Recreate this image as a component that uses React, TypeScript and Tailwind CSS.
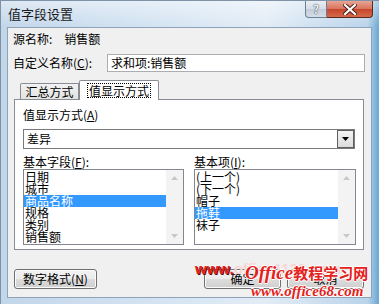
import React from "react";

const Btn = ({ children, className = "" }: { children: React.ReactNode; className?: string }) => (
  <div
    className={
      "h-[20px] rounded-[3px] border border-[#707070] flex items-center justify-center text-[12px] text-black bg-[linear-gradient(to_bottom,#f2f2f2_0%,#ebebeb_50%,#dddddd_50%,#cfcfcf_100%)] shadow-[inset_0_0_0_1px_#fbfbfb] " +
      className
    }
  >
    {children}
  </div>
);

const ScrollBar = () => (
  <div className="w-[17px] h-full bg-[#f3f3f3] flex flex-col justify-between items-center py-[6px]">
    <svg width="7" height="4" viewBox="0 0 7 4">
      <path d="M0 4 L3.5 0 L7 4 Z" fill="#c8c8c8" />
    </svg>
    <svg width="7" height="4" viewBox="0 0 7 4">
      <path d="M0 0 L3.5 4 L7 0 Z" fill="#c8c8c8" />
    </svg>
  </div>
);

const ListBox = ({ items, sel, width }: { items: string[]; sel: number; width: number }) => (
  <div
    className="h-[76px] border border-[#828790] bg-white flex"
    style={{ width }}
  >
    <div className="flex-1 flex flex-col pt-[1px]">
      {items.map((it, i) => (
        <div
          key={i}
          className={
            "h-[12px] leading-[12px] pl-[1px] text-[12px] whitespace-nowrap " +
            (i === sel ? "bg-[#3399ff] text-white" : "text-black")
          }
        >
          {it}
        </div>
      ))}
    </div>
    <ScrollBar />
  </div>
);

export default function App() {
  return (
    <div className="w-[379px] h-[304px] relative overflow-hidden font-['Noto_Sans_CJK_SC','Noto_Sans',sans-serif] text-[12px] text-black bg-[linear-gradient(to_right,#c2d6ea_0%,#d3e3f2_40%,#e2ecf6_70%,#b9d3ea_97%,#6aa6d2_100%)] border-l border-t border-[#7f93a8]">
      {/* title bar */}
      <div className="h-[26px] flex items-start bg-[linear-gradient(to_bottom,rgba(255,255,255,0.45),rgba(255,255,255,0))]">
        <div className="pl-[7px] pt-[6px] text-[13px] leading-[14px] text-[#1a1a1a]">值字段设置</div>
        <div className="ml-auto mr-[6px] flex">
          <div className="w-[22px] h-[17px] rounded-bl-[4px] border border-t-0 border-[#6d7f93] bg-[linear-gradient(to_bottom,#e9eef4_0%,#d4dde8_50%,#c2ccd8_50%,#d5dde6_100%)] flex items-center justify-center">
            <span className="text-[12px] leading-[12px] font-bold text-[#f4f6f8] [text-shadow:0_0_1px_#2f3c4a,0_0_1px_#2f3c4a]">?</span>
          </div>
          <div className="w-[46px] h-[17px] rounded-br-[4px] border border-t-0 border-l-0 border-[#5a2a20] bg-[linear-gradient(to_bottom,#e7a595_0%,#d8735c_50%,#c5452a_50%,#d56a4d_100%)] flex items-center justify-center">
            <svg width="14" height="11" viewBox="0 0 14 11">
              <path d="M2 1 L12 10 M12 1 L2 10" stroke="#4b1b12" strokeWidth="4" strokeLinecap="square" />
              <path d="M2 1 L12 10 M12 1 L2 10" stroke="#ffffff" strokeWidth="2.2" strokeLinecap="square" />
            </svg>
          </div>
        </div>
      </div>

      {/* client */}
      <div className="ml-[6px] w-[365px] h-[271px] border border-[#8ea3b9] bg-[#f0f0f0] flex flex-col">
        <div className="mt-[4px] h-[14px] leading-[14px] pl-[5px] flex">
          <span>源名称:</span>
          <span className="ml-[12px]">销售额</span>
        </div>
        <div className="mt-[8px] h-[18px] flex items-center pl-[5px]">
          <span className="w-[94px] leading-[14px]">
            自定义名称(<span className="underline">C</span>):
          </span>
          <div className="w-[258px] h-[18px] border border-[#abadb3] bg-white leading-[16px] pl-[3px]">
            求和项:销售额
          </div>
        </div>

        {/* tabs */}
        <div className="mt-[8px] h-[19px] flex items-end pl-[12px]">
          <div className="w-[59px] h-[16px] border border-b-0 border-[#898c95] bg-[linear-gradient(to_bottom,#f2f2f2,#e3e3e3)] flex items-center justify-center leading-[14px] rounded-tl-[2px]">
            汇总方式
          </div>
          <div className="w-[80px] h-[20px] -mb-[1px] border border-b-0 border-[#898c95] bg-white flex items-center justify-center rounded-t-[2px] relative z-10">
            <span className="outline-1 outline-dotted outline-[#000] leading-[13px] px-[1px]">值显示方式</span>
          </div>
        </div>

        {/* panel */}
        <div className="ml-[6px] w-[350px] h-[151px] border border-[#898c95] bg-white flex flex-col pl-[8px]">
          <div className="mt-[8px] h-[14px] leading-[14px]">
            值显示方式(<span className="underline">A</span>)
          </div>
          <div className="mt-[7px] w-[332px] h-[20px] border border-[#7a7a7a] bg-white flex items-center">
            <span className="pl-[3px] flex-1 leading-[14px]">差异</span>
            <div className="w-[17px] h-[18px] mr-[0px] border border-[#5f5f5f] bg-[linear-gradient(to_bottom,#f4f4f4,#dcdcdc)] flex items-center justify-center">
              <svg width="7" height="4" viewBox="0 0 7 4">
                <path d="M0 0 L3.5 4 L7 0 Z" fill="#000" />
              </svg>
            </div>
          </div>
          <div className="mt-[6px] h-[14px] flex leading-[14px]">
            <span className="w-[171px]">
              基本字段(<span className="underline">F</span>):
            </span>
            <span>
              基本项(<span className="underline">I</span>):
            </span>
          </div>
          <div className="flex gap-[10px]">
            <ListBox items={["日期", "城市", "商品名称", "规格", "类别", "销售额"]} sel={2} width={161} />
            <ListBox items={["(上一个)", "(下一个)", "帽子", "拖鞋", "袜子"]} sel={3} width={162} />
          </div>
        </div>

        {/* buttons */}
        <div className="mt-[19px] flex pl-[6px] pr-[7px]">
          <Btn className="w-[83px]">
            数字格式(<span className="underline">N</span>)
          </Btn>
          <div className="ml-auto flex gap-[6px]">
            <Btn className="w-[77px]">确定</Btn>
            <Btn className="w-[77px]">取消</Btn>
          </div>
        </div>
      </div>

      {/* watermark */}
      <div className="absolute left-[194px] top-[259px] font-['Liberation_Sans',sans-serif] font-bold text-[15px] leading-[18px] whitespace-nowrap">
        <span className="text-[#e3231b] [text-shadow:1px_1px_0_#5a0a0a]">www.</span>
        <span className="text-[#f7d6d6]">office1123.com</span>
      </div>
      <div className="absolute left-[244px] top-[262px] whitespace-nowrap font-bold text-[#e4211b] leading-[20px] [text-shadow:1px_0_0_#fff,-1px_0_0_#fff,0_1px_0_#fff,0_-1px_0_#fff]">
        <span className="font-['Liberation_Serif',serif] italic text-[19px]">Office</span>
        <span className="text-[15px]">教程学习网</span>
      </div>
      <div className="absolute left-[250px] top-[282px] whitespace-nowrap font-['Liberation_Serif',serif] italic font-bold text-[15px] leading-[16px] text-[#e4211b] [text-shadow:1px_0_0_#fff,-1px_0_0_#fff,0_1px_0_#fff,0_-1px_0_#fff]">
        www.office68.com
      </div>
    </div>
  );
}
